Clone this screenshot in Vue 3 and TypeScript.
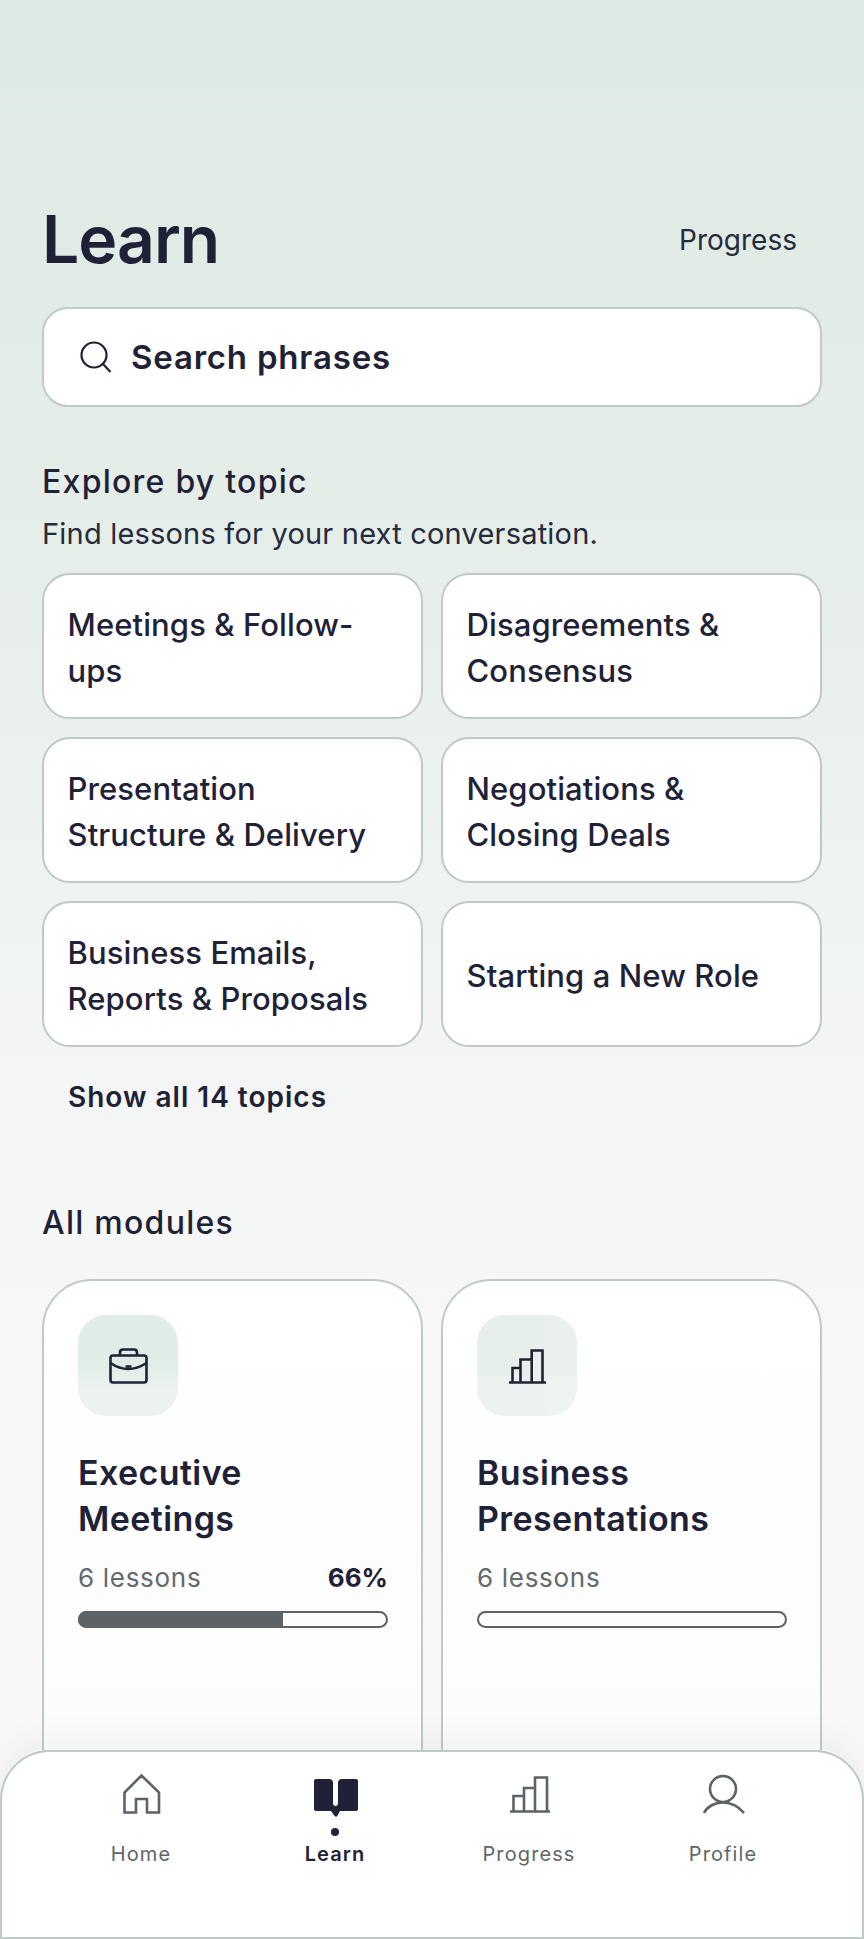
<template>
  <div class="page">
    <header class="head">
      <h1 class="title">Learn</h1>
      <span class="head-link">Progress</span>
    </header>

    <div class="search">
      <svg class="search-icon" viewBox="0 0 34 34" width="34" height="34" fill="none">
        <circle cx="15" cy="15" r="12.5" />
        <path d="M24 24l7.5 8" />
      </svg>
      <span>Search phrases</span>
    </div>

    <h2 class="section-title">Explore by topic</h2>
    <p class="section-sub">Find lessons for your next conversation.</p>

    <div class="topics">
      <div v-for="topic in topics" :key="topic" class="topic">{{ topic }}</div>
    </div>
    <div class="show-all">Show all 14 topics</div>

    <h2 class="section-title modules-title">All modules</h2>

    <div class="modules">
      <div v-for="mod in modules" :key="mod.name" class="module">
        <div class="module-icon" :class="mod.icon">
          <svg v-if="mod.icon === 'case'" viewBox="0 0 48 48" width="48" height="48" fill="none">
            <rect x="6.5" y="13.5" width="36" height="27" rx="2.5" />
            <path d="M16 13V10.5Q16 7.5 19 7.5H30Q33 7.5 33 10.5V13" />
            <path d="M6.5 21Q24 33 42.5 21" />
            <path d="M21.5 24.5h6" />
          </svg>
          <svg v-else viewBox="0 0 48 48" width="48" height="48" fill="none">
            <path d="M6 40.5H43" />
            <path d="M9.5 40V26H17.5M17.5 40V17.500H28.700M28.700 40V8.500H39.500V40" />
          </svg>
        </div>
        <h3 class="module-name">{{ mod.name }}</h3>
        <div class="module-meta">
          <span>{{ mod.lessons }} lessons</span>
          <b v-if="mod.percent">{{ mod.percent }}%</b>
        </div>
        <div class="bar">
          <div class="bar-fill" :style="{ width: mod.percent + '%' }"></div>
        </div>
      </div>
    </div>

    <nav class="nav">
      <div v-for="tab in tabs" :key="tab.label" class="tab" :class="{ active: tab.active }">
        <svg viewBox="0 0 48 48" width="48" height="48" fill="none">
          <path v-if="tab.label === 'Home'" d="M7.500 41.500V21.500L24.500 4.500L42 21.500V41.500H30V28H19V41.500Z" />
          <path
            v-else-if="tab.label === 'Learn'"
            class="solid"
            d="M5 8H18Q22 8 22 12V32Q22 35 24.500 35Q27 35 27 32V12Q27 8 31 8H45Q47 8 47 10V38Q47 40 45 40H29L26 45.500H24L20 40H5Q3 40 3 38V10Q3 8 5 8Z"
          />
          <template v-else-if="tab.label === 'Progress'">
            <path d="M5 40.500H45" />
            <path d="M8.500 40V25H19M19 40V17H30M30 40V6.500H42V40" />
          </template>
          <template v-else>
            <circle cx="24" cy="18" r="13" />
            <path d="M5 42C8 36 15 31.500 24 31.500S40 36 45 42" />
          </template>
        </svg>
        <i class="dot"></i>
        <span>{{ tab.label }}</span>
      </div>
    </nav>
  </div>
</template>

<script setup lang="ts">
const topics = [
  'Meetings & Follow-ups',
  'Disagreements & Consensus',
  'Presentation Structure & Delivery',
  'Negotiations & Closing Deals',
  'Business Emails, Reports & Proposals',
  'Starting a New Role',
]

const modules = [
  { name: 'Executive Meetings', lessons: 6, percent: 66, icon: 'case' },
  { name: 'Business Presentations', lessons: 6, percent: 0, icon: 'bars' },
]

const tabs = [
  { label: 'Home', active: false },
  { label: 'Learn', active: true },
  { label: 'Progress', active: false },
  { label: 'Profile', active: false },
]
</script>

<style>
body {
  margin: 0;
}
</style>

<style scoped>
.page {
  position: relative;
  height: 1939px;
  overflow: hidden;
  box-sizing: border-box;
  padding: 205px 42px 0;
  background: linear-gradient(180deg, #dde9e3 0%, #e0ebe5 6%, #e4ede8 25%, #eef3f0 45%, #f5f7f6 60%, #f8f9f8 100%);
  font-family: Inter, "Liberation Sans", sans-serif;
  color: #1f2237;
}

.head {
  display: flex;
  justify-content: space-between;
  align-items: center;
  height: 68px;
}

.title {
  margin: 0;
  font-size: 66px;
  line-height: 68px;
  font-weight: 600;
  letter-spacing: -1px;
}

.head-link {
  margin: 2px 25px 0 0;
  font-size: 28px;
  font-weight: 400;
  color: #262a3d;
}

.search {
  display: flex;
  align-items: center;
  gap: 18px;
  height: 100px;
  margin-top: 34px;
  padding-left: 35px;
  box-sizing: border-box;
  border: 2px solid #bfcac5;
  border-radius: 26px;
  background: #fff;
  font-size: 33px;
  font-weight: 600;
  letter-spacing: 0.8px;
}

.search-icon circle,
.search-icon path {
  stroke: #1f2237;
  stroke-width: 2.2;
}

.section-title {
  margin: 53px 0 0;
  font-size: 32px;
  line-height: 44px;
  font-weight: 450;
  letter-spacing: 1.25px;
}

.section-sub {
  margin: 10px 0 0;
  font-size: 29px;
  line-height: 40px;
  letter-spacing: 0.2px;
  color: #262a3d;
}

.topics {
  display: grid;
  grid-template-columns: 1fr 1fr;
  gap: 18px;
  margin-top: 19px;
}

.topic {
  display: flex;
  align-items: center;
  height: 146px;
  box-sizing: border-box;
  padding: 3px 24px 0 23.5px;
  border: 2px solid #bfcac5;
  border-radius: 28px;
  background: #fff;
  font-size: 31px;
  line-height: 46px;
  font-weight: 500;
  letter-spacing: 0.1px;
}

.show-all {
  margin: 30px 0 0 26px;
  font-size: 28px;
  line-height: 40px;
  font-weight: 600;
  letter-spacing: 1px;
}

.modules-title {
  margin-top: 84px;
}

.modules {
  display: grid;
  grid-template-columns: 1fr 1fr;
  gap: 18px;
  margin-top: 34px;
}

.module {
  height: 700px;
  box-sizing: border-box;
  padding: 34px 33px 0 34px;
  border: 2px solid #bfcac5;
  border-radius: 50px;
  background: linear-gradient(180deg, #fff, #f9fbfa);
}

.module-icon {
  display: flex;
  align-items: center;
  justify-content: center;
  width: 100px;
  height: 101px;
  border-radius: 28px;
}

.module-icon.case {
  background:
    linear-gradient(180deg, rgba(220, 235, 227, 0.7) 0 50%, transparent 72%),
    #ebf2ef;
}

.module-icon.bars {
  background:
    linear-gradient(90deg, transparent 0 68%, rgba(255, 255, 255, 0.12) 68% 100%),
    linear-gradient(180deg, #e6efea 0 60%, #ebf2ef 60%);
}

.module-icon svg rect,
.module-icon svg path {
  stroke: #1f2237;
  stroke-width: 2.600;
}

.module-name {
  margin: 34px 0 0;
  font-size: 34px;
  line-height: 46px;
  font-weight: 600;
  letter-spacing: 0.4px;
}

.module-meta {
  display: flex;
  justify-content: space-between;
  margin-top: 18px;
  font-size: 26px;
  line-height: 36px;
  letter-spacing: 0.7px;
  color: #63696d;
}

.module-meta b {
  font-weight: 700;
  letter-spacing: 0;
  color: #1f2237;
}

.bar {
  height: 17px;
  margin-top: 15px;
  border-radius: 9px;
  box-shadow: inset 0 0 0 2px #5c6265;
  background: #fafbfa;
  overflow: hidden;
}

.bar-fill {
  height: 100%;
  background: #5c6265;
}

.nav {
  position: absolute;
  left: 0;
  right: 0;
  bottom: 0;
  height: 189px;
  box-sizing: border-box;
  display: grid;
  grid-template-columns: repeat(4, 194px);
  padding: 19px 0 0 42px;
  border: 2px solid #bfcac5;
  border-radius: 50px 50px 0 0;
  background: #fff;
  box-shadow: 0 -14px 30px rgba(60, 80, 70, 0.05);
}

.tab {
  display: flex;
  flex-direction: column;
  align-items: center;
  font-size: 20px;
  line-height: 28px;
  letter-spacing: 1.1px;
  color: #5f666a;
}

.tab svg path,
.tab svg circle {
  stroke: #5c6368;
  stroke-width: 2.600;
}

.tab svg path.solid {
  fill: #1f2237;
  stroke: none;
}

.dot {
  width: 8px;
  height: 8px;
  margin: 9px 0 4px;
  border-radius: 50%;
}

.tab.active {
  font-weight: 600;
  color: #1f2237;
}

.tab.active .dot {
  background: #1f2237;
}
</style>
